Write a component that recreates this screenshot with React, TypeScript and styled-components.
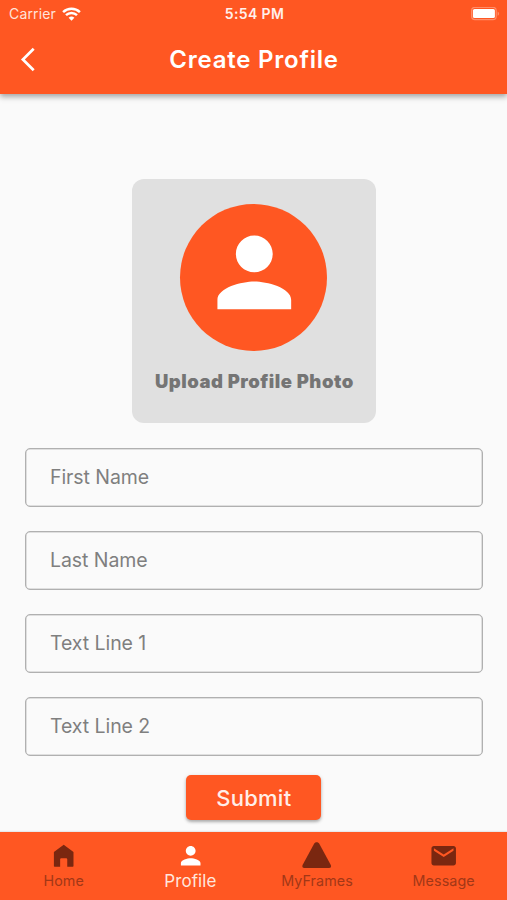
import React from "react";
import styled, { createGlobalStyle } from "styled-components";

const ORANGE = "#ff5722";
const INK = "#7a2710";

const GlobalStyle = createGlobalStyle`
  * { box-sizing: border-box; }
  body {
    margin: 0;
    background: #fafafa;
    font-family: Inter, "Liberation Sans", sans-serif;
  }
`;

const Screen = styled.div`
  display: flex;
  flex-direction: column;
  width: 507px;
  height: 900px;
  overflow: hidden;
  background: #fafafa;
`;

const Header = styled.header`
  flex: none;
  height: 94px;
  background: ${ORANGE};
  color: #fff;
  box-shadow: 0 2px 5px rgba(0, 0, 0, 0.24), 0 4px 6px rgba(0, 0, 0, 0.14);
`;

const StatusBar = styled.div`
  display: grid;
  grid-template-columns: 1fr auto 1fr;
  align-items: center;
  height: 25px;
  padding: 3px 7px 0 9px;
  line-height: 20px;
`;

const Carrier = styled.div`
  display: flex;
  align-items: center;
  gap: 6px;
  font-size: 14px;
  letter-spacing: 0.15px;
  color: #ffe3da;
`;

const Clock = styled.time`
  font-size: 14px;
  font-weight: 600;
  letter-spacing: 0.35px;
  color: #fff0eb;
`;

const BatterySlot = styled.div`
  display: flex;
  justify-content: flex-end;
`;

const TitleBar = styled.div`
  display: grid;
  grid-template-columns: 60px 1fr 60px;
  align-items: center;
  height: 69px;
`;

const BackButton = styled.button`
  display: flex;
  width: 40px;
  margin-left: 8px;
  padding: 0 0 0 12px;
  border: 0;
  background: none;
`;

const Title = styled.h1`
  margin: 0 0 0 1px;
  text-align: center;
  font-size: 24px;
  line-height: 30px;
  font-weight: 600;
  letter-spacing: 0.78px;
`;

const Content = styled.main`
  flex: 1;
  display: flex;
  flex-direction: column;
  align-items: center;
  padding: 85.4px 24.3px 0 25px;
`;

const PhotoCard = styled.button`
  display: flex;
  flex-direction: column;
  align-items: center;
  width: 244px;
  height: 244px;
  padding: 24.2px 0 0;
  border: 0;
  border-radius: 12px;
  background: #e0e0e0;
  font-family: inherit;
`;

const Avatar = styled.span`
  display: flex;
  justify-content: center;
  width: 147px;
  height: 147px;
  padding-top: 13px;
  border-radius: 50%;
  background: ${ORANGE};
`;

const PhotoLabel = styled.span`
  margin: 17.5px 0 0 1px;
  font-size: 18.5px;
  line-height: 26px;
  font-weight: 900;
  letter-spacing: 0.5px;
  color: #757575;
  white-space: nowrap;
`;

const Form = styled.form`
  display: flex;
  flex-direction: column;
  align-items: center;
  width: 100%;
  padding-top: 24.6px;
`;

const Fields = styled.div`
  display: grid;
  gap: 24px;
  width: 100%;
`;

const Field = styled.input`
  width: 100%;
  height: 59px;
  padding: 0 24px 1px;
  border: 1px solid #b0b0b0;
  border-radius: 5px;
  box-shadow: inset 0 0 0 0.5px #c4c4c4;
  background: transparent;
  font-family: inherit;
  font-size: 19.5px;
  letter-spacing: -0.07px;
  outline: none;
  &::placeholder {
    color: #7f7f7f;
    opacity: 1;
  }
`;

const Submit = styled.button`
  width: 135px;
  height: 45px;
  margin-top: 19px;
  padding: 1px 0 0;
  border: 0;
  border-radius: 5px;
  background: ${ORANGE};
  color: #ffeee8;
  font-family: inherit;
  font-size: 22px;
  font-weight: 500;
  letter-spacing: 0.25px;
  box-shadow: 0 2px 3px rgba(0, 0, 0, 0.26), 0 1px 5px rgba(0, 0, 0, 0.1);
`;

const BottomNav = styled.nav`
  flex: none;
  display: grid;
  grid-template-columns: repeat(4, 1fr);
  height: 68.5px;
  padding-left: 0.4px;
  background: ${ORANGE};
  box-shadow: 0 -1px 1px rgba(0, 0, 0, 0.07);
`;

const NavItem = styled.a<{ $active?: boolean }>`
  display: flex;
  flex-direction: column;
  align-items: center;
  padding-top: 9.5px;
  color: ${(p) => (p.$active ? "#fff" : INK)};
`;

const NavLabel = styled.span<{ $active?: boolean }>`
  margin-top: ${(p) => (p.$active ? 0.6 : 0.4)}px;
  font-size: ${(p) => (p.$active ? 17 : 14.3)}px;
  line-height: 20px;
  letter-spacing: 0.1px;
  color: ${(p) => (p.$active ? "#ffe6dd" : "#a23717")};
`;

const PERSON =
  "M12 12c2.21 0 4-1.79 4-4s-1.79-4-4-4-4 1.79-4 4 1.79 4 4 4zm0 2c-2.67 0-8 1.34-8 4v2h16v-2c0-2.66-5.33-4-8-4z";

const NAV = [
  {
    label: "Home",
    path: "M4.6 21c-.4 0-.6-.2-.6-.6V9l8-6 8 6v11.4c0 .4-.2.6-.6.6h-4.5v-6c0-.6-.3-.9-.9-.9h-4c-.6 0-.9.3-.9.9v6z",
  },
  { label: "Profile", path: PERSON, active: true },
  {
    label: "MyFrames",
    path: "M10.1 1.9 C10.9 .6 13.1 .6 13.9 1.9 L23.4 19.4 C24.2 21 23.5 22.1 22 22.1 H2 C.5 22.1 -.2 21 .6 19.4 Z",
  },
  {
    label: "Message",
    path: "M20 4H4c-1.1 0-1.99.9-1.99 2L2 18c0 1.1.9 2 2 2h16c1.1 0 2-.9 2-2V6c0-1.1-.9-2-2-2zm0 4-8 5-8-5V6l8 5 8-5v2z",
  },
];

function Glyph({ path }: { path: string }) {
  return (
    <svg width="29.4" height="29.4" viewBox="0 0 24 24" fill="currentColor" overflow="visible">
      <path d={path} />
    </svg>
  );
}

export default function App() {
  return (
    <Screen>
      <GlobalStyle />
      <Header>
        <StatusBar>
          <Carrier>
            Carrier
            <svg width="19" height="14" viewBox="0 0 19 14" fill="none" stroke="#fff" strokeWidth="2.5">
              <path d="M1.1 5.2a12.2 12.2 0 0 1 16.8 0" />
              <path d="M4 8.2a8 8 0 0 1 11 0" />
              <path d="M9.5 13.8 6.6 10.8a4.3 4.3 0 0 1 5.8 0z" fill="#fff" stroke="none" />
            </svg>
          </Carrier>
          <Clock>5:54 PM</Clock>
          <BatterySlot>
            <svg width="29" height="14" viewBox="0 0 29 14">
              <rect x="0.6" y="0.3" width="24.6" height="12.4" rx="3.4" fill="none" stroke="#ff8d69" strokeWidth="1.2" />
              <rect x="1.9" y="1.9" width="22" height="9.2" rx="1.6" fill="#fff" />
              <path d="M26.6 4.4c2 .8 2 3.6 0 4.4z" fill="#ff8d69" />
            </svg>
          </BatterySlot>
        </StatusBar>
        <TitleBar>
          <BackButton aria-label="Back">
            <svg width="16" height="25" viewBox="0 0 16 25" fill="none" stroke="#fff" strokeWidth="2.7">
              <path d="M13.7 1.8 2.9 12.5 13.7 23.2" />
            </svg>
          </BackButton>
          <Title>Create Profile</Title>
        </TitleBar>
      </Header>
      <Content>
        <PhotoCard>
          <Avatar>
            <svg width="110.6" height="110.6" viewBox="0 0 24 24" fill="#fff">
              <path d={PERSON} />
            </svg>
          </Avatar>
          <PhotoLabel>Upload Profile Photo</PhotoLabel>
        </PhotoCard>
        <Form>
          <Fields>
            <Field placeholder="First Name" />
            <Field placeholder="Last Name" />
            <Field placeholder="Text Line 1" />
            <Field placeholder="Text Line 2" />
          </Fields>
          <Submit type="button">Submit</Submit>
        </Form>
      </Content>
      <BottomNav>
        {NAV.map((item) => (
          <NavItem key={item.label} $active={item.active}>
            <Glyph path={item.path} />
            <NavLabel $active={item.active}>{item.label}</NavLabel>
          </NavItem>
        ))}
      </BottomNav>
    </Screen>
  );
}
